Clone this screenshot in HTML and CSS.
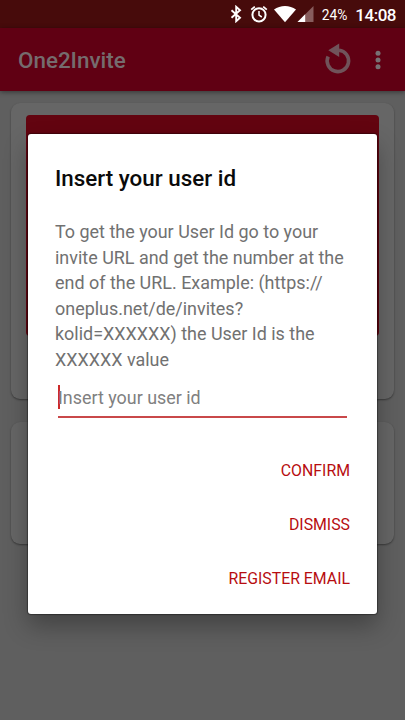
FILE: index.html
```html
<!DOCTYPE html>
<html lang="en">
<head>
<meta charset="utf-8">
<title>One2Invite</title>
<link rel="stylesheet" href="styles.css">
</head>
<body>
<div class="screen">
  <div class="statusbar">
    <svg class="bt" width="12" height="18" viewBox="0 0 12 18"><path d="M1.500 5.200 10 12.800 6.200 16.200V1.800L10 5.200 1.500 12.800" fill="none" stroke="#fff" stroke-width="1.900"/></svg>
    <svg class="alarm" width="18" height="18" viewBox="0 0 18 18" fill="none" stroke="#fff"><circle cx="9" cy="9.800" r="6.600" stroke-width="2"/><path d="M9 6v4.200l2.800 1.800" stroke-width="1.500"/><path d="M1.200 4.600 4.800 1.600M16.800 4.600 13.200 1.600" stroke-width="1.800"/></svg>
    <svg class="wifi" width="24" height="18" viewBox="0 0 24 18"><path d="M1 4.600C7.200-.2 16.800-.2 23 4.600L12 17.200Z" fill="#fff"/></svg>
    <svg class="signal" width="17" height="18" viewBox="0 0 17 18"><path d="M.5 17 16.500 1V17Z" fill="#875d5d"/><path d="M.5 17 8.200 9.300V17Z" fill="#fff"/></svg>
    <span class="battery">24%</span>
    <span class="clock">14:08</span>
  </div>
  <div class="appbar">
    <h1>One2Invite</h1>
    <svg class="refresh" width="28" height="32" viewBox="0 0 28 32"><path d="M4.100 13.500A10.700 10.700 0 1 0 15 7.200" fill="none" stroke="#70535a" stroke-width="3.600"/><path d="M4.300 7.300 15.200.5V14Z" fill="#70535a"/></svg>
    <svg class="more" width="6" height="20" viewBox="0 0 6 20" fill="#777174"><circle cx="3" cy="3.200" r="2.500"/><circle cx="3" cy="10" r="2.500"/><circle cx="3" cy="16.800" r="2.500"/></svg>
  </div>
  <div class="content">
    <div class="card first"><div class="banner"></div></div>
    <div class="card second"></div>
  </div>
  <div class="dialog">
    <h2>Insert your user id</h2>
    <p>To get the your User Id go to your<br>invite URL and get the number at the<br>end of the URL. Example: (https://<br>oneplus.net/de/invites?<br>kolid=XXXXXX) the User Id is the<br>XXXXXX value</p>
    <div class="field"><span class="caret"></span><span class="hint">Insert your user id</span></div>
    <div class="actions">
      <span>CONFIRM</span>
      <span>DISMISS</span>
      <span>REGISTER EMAIL</span>
    </div>
  </div>
</div>
</body>
</html>
```
FILE: styles.css
```css
* { box-sizing: border-box; }
body { margin: 0; font-family: Roboto, sans-serif; }
h1, h2, p { margin: 0; }
svg { display: block; flex: none; }
.screen {
  position: relative;
  width: 405px;
  height: 720px;
  overflow: hidden;
  background: #5f5f5f;
}
.statusbar {
  display: flex;
  align-items: center;
  justify-content: flex-end;
  height: 28px;
  padding-right: 9px;
  background: #470b0b;
  color: #fff;
  white-space: nowrap;
}
.alarm { margin-left: 8px; }
.wifi { margin-left: 5px; }
.battery { margin-left: 8px; font-size: 13.8px; line-height: 28px; padding-top: 1px; }
.clock { margin-left: 8px; font-size: 17px; font-weight: 500; line-height: 28px; padding-top: 1px; letter-spacing: -0.5px; }
.appbar {
  position: relative;
  display: flex;
  align-items: center;
  height: 63px;
  padding: 0 24px 0 18px;
  background: #600013;
  box-shadow: 0 1px 5px rgba(0, 0, 0, 0.45);
}
.appbar h1 {
  flex: 1;
  color: #756c6e;
  font-size: 22.4px;
  font-weight: 500;
  line-height: 30px;
}
.refresh { margin: 0 23px 1px 0; }
.more { margin-top: 1px; }
.content { padding: 12px 11px 0; }
.card {
  border-radius: 9px;
  background: #666;
  box-shadow: 0 1px 2px rgba(0, 0, 0, 0.4);
}
.first { height: 296px; padding: 12px 15px; }
.banner { height: 221px; border-radius: 4px; background: #630410; }
.second { height: 122px; margin-top: 23px; }
.dialog {
  position: absolute;
  left: 28px;
  top: 134px;
  width: 349px;
  height: 480px;
  padding: 29px 27px 0;
  border-radius: 3px;
  background: #fff;
  box-shadow: 0 0 1px 1px rgba(0, 0, 0, 0.35), 0 12px 24px rgba(0, 0, 0, 0.3);
}
.dialog h2 {
  color: #0a0a0a;
  font-size: 22.4px;
  font-weight: 500;
  line-height: 30px;
  white-space: nowrap;
}
.dialog p {
  margin-top: 26px;
  color: #717171;
  font-size: 17.95px;
  line-height: 25.5px;
  white-space: nowrap;
}
.field {
  display: flex;
  align-items: center;
  height: 37px;
  margin: 9px 3px 0 3px;
  padding-bottom: 3px;
  border-bottom: 2px solid #c9484a;
  color: #808080;
  font-size: 17.9px;
}
.caret { width: 2px; height: 24px; margin-right: -2px; background: #cc2a2a; }
.actions {
  display: flex;
  flex-direction: column;
  align-items: flex-end;
  margin-top: 26px;
  color: #b70d10;
  font-size: 15.85px;
  line-height: 54px;
}
```
